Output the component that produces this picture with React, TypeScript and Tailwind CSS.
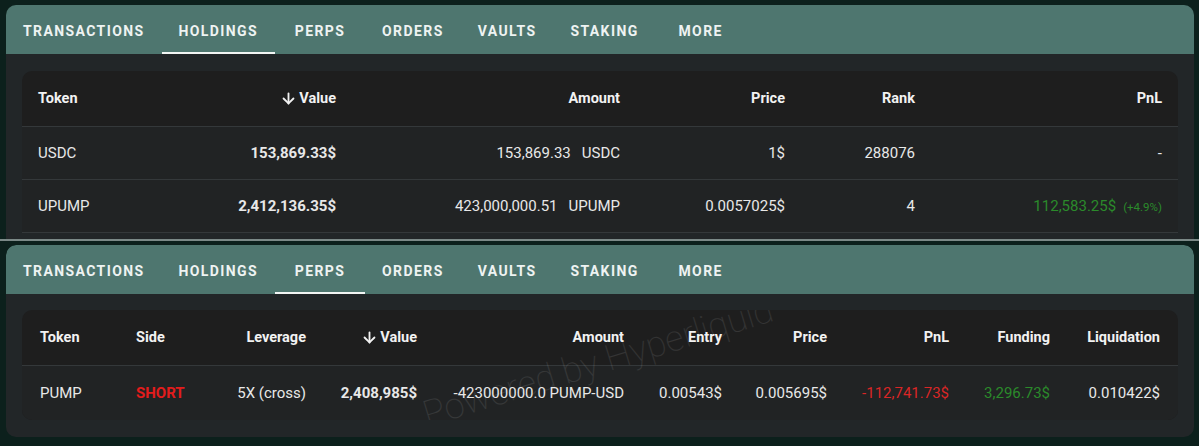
import React from 'react';
import { ArrowDown } from 'lucide-react';

const TABS = ['TRANSACTIONS', 'HOLDINGS', 'PERPS', 'ORDERS', 'VAULTS', 'STAKING', 'MORE'];

function TabBar({ active }: { active: string }) {
  return (
    <div className="flex h-[49px] bg-[#4e766f] rounded-t-[10px]">
      {TABS.map((t) => (
        <div
          key={t}
          className="relative flex min-w-[90px] items-center justify-center px-[17px] pt-[4px] text-[14px] font-bold tracking-[0.1em] text-[#eef3f2]"
        >
          {t}
          {t === active && <div className="absolute bottom-0 left-0 right-0 h-[2px] bg-[#f2f5f4]" />}
        </div>
      ))}
    </div>
  );
}

function SortValue() {
  return (
    <span className="inline-flex items-center gap-[2px]">
      <ArrowDown size={17} strokeWidth={2.6} />
      Value
    </span>
  );
}

const holdingsCols = 'grid grid-cols-[158px_172px_284px_165px_130px_1fr]';
const perpsCols = 'grid grid-cols-[98px_80px_122px_111px_207px_98px_105px_122px_101px_1fr]';

function Holdings() {
  const rows = [
    { token: 'USDC', value: '153,869.33$', amt: '153,869.33', unit: 'USDC', price: '1$', rank: '288076', pnl: null },
    { token: 'UPUMP', value: '2,412,136.35$', amt: '423,000,000.51', unit: 'UPUMP', price: '0.0057025$', rank: '4', pnl: '112,583.25$' },
  ];
  return (
    <div className="rounded-[10px] bg-[#1e1e1e] text-[15px] text-[#e8e8e8]">
      <div className={`${holdingsCols} h-[56px] items-center border-b border-[#34383a] text-[14.5px] font-bold text-[#f2f2f2]`}>
        <div className="pl-4">Token</div>
        <div className="flex justify-end pr-4"><SortValue /></div>
        <div className="pr-4 text-right">Amount</div>
        <div className="pr-4 text-right">Price</div>
        <div className="pr-4 text-right">Rank</div>
        <div className="pr-4 text-right">PnL</div>
      </div>
      {rows.map((r) => (
        <div key={r.token} className={`${holdingsCols} h-[53px] items-center border-b border-[#34383a] bg-[#212324]`}>
          <div className="pl-4">{r.token}</div>
          <div className="pr-4 text-right font-bold">{r.value}</div>
          <div className="pr-4 text-right">
            {r.amt}
            <span className="ml-[11px]">{r.unit}</span>
          </div>
          <div className="pr-4 text-right">{r.price}</div>
          <div className="pr-4 text-right">{r.rank}</div>
          <div className="pr-4 text-right">
            {r.pnl ? (
              <span className="text-[#2b8a2b]">
                {r.pnl}
                <span className="ml-[7px] text-[11.5px]">(+4.9%)</span>
              </span>
            ) : (
              '-'
            )}
          </div>
        </div>
      ))}
    </div>
  );
}

function Perps() {
  return (
    <div className="relative overflow-hidden rounded-[10px] bg-[#1e1e1e] text-[15px] text-[#e8e8e8]">
      <div className={`${perpsCols} h-[56px] items-center border-b border-[#34383a] text-[14.5px] font-bold text-[#f2f2f2]`}>
        <div className="pl-[18px]">Token</div>
        <div className="pl-4">Side</div>
        <div className="pr-4 text-right">Leverage</div>
        <div className="flex justify-end pr-4"><SortValue /></div>
        <div className="pr-4 text-right">Amount</div>
        <div className="pr-4 text-right">Entry</div>
        <div className="pr-4 text-right">Price</div>
        <div className="pr-4 text-right">PnL</div>
        <div className="pr-4 text-right">Funding</div>
        <div className="pr-[18px] text-right">Liquidation</div>
      </div>
      <div className={`${perpsCols} h-[54px] items-center bg-[#212324]`}>
        <div className="pl-[18px]">PUMP</div>
        <div className="pl-4 font-bold text-[#e31c1c]">SHORT</div>
        <div className="pr-4 text-right">5X (cross)</div>
        <div className="pr-4 text-right font-bold">2,408,985$</div>
        <div className="pr-4 text-right">-423000000.0 PUMP-USD</div>
        <div className="pr-4 text-right">0.00543$</div>
        <div className="pr-4 text-right">0.005695$</div>
        <div className="pr-4 text-right text-[#d92626]">-112,741.73$</div>
        <div className="pr-4 text-right text-[#2b8a2b]">3,296.73$</div>
        <div className="pr-[18px] text-right">0.010422$</div>
      </div>
      <div className="pointer-events-none absolute left-[576px] top-[52px] -translate-x-1/2 -translate-y-1/2 -rotate-[17deg] whitespace-nowrap text-[36px] font-thin text-white/[0.1]">
        Powered by Hyperliquid
      </div>
    </div>
  );
}

export default function App() {
  return (
    <div className="h-[446px] w-[1199px] overflow-hidden bg-[#0c201c]" style={{ fontFamily: 'Roboto, "Liberation Sans", sans-serif' }}>
      <div className="h-[239px] overflow-hidden pl-[6px] pr-[5px] pt-[5px]">
        <TabBar active="HOLDINGS" />
        <div className="bg-[#222628] px-4 pt-[17px] pb-6">
          <Holdings />
        </div>
      </div>
      <div className="h-[2px] bg-[#7b8987]" />
      <div className="pl-[6px] pr-[5px] pt-[4px]">
        <div className="overflow-hidden rounded-[10px]">
          <TabBar active="PERPS" />
          <div className="bg-[#222628] px-4 pt-[16px] pb-[17px]">
            <Perps />
          </div>
        </div>
      </div>
    </div>
  );
}
